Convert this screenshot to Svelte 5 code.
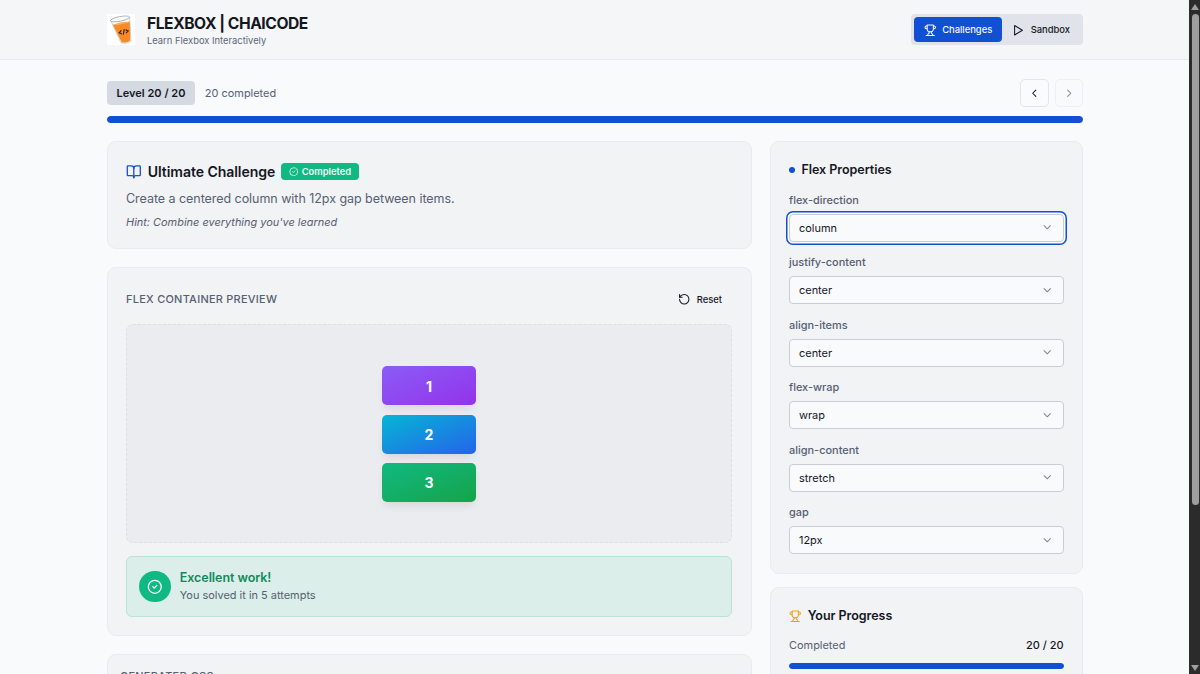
<script>
  let mode = "challenges";
  let level = 20;
  const total = 20;
  const completed = 20;
  let focused = "flex-direction";

  const properties = [
    { name: "flex-direction", value: "column" },
    { name: "justify-content", value: "center" },
    { name: "align-items", value: "center" },
    { name: "flex-wrap", value: "wrap" },
    { name: "align-content", value: "stretch" },
    { name: "gap", value: "12px" },
  ];

  const items = ["violet", "cyan", "green"];

  const previous = () => {
    if (level > 1) level -= 1;
  };

  const next = () => {
    if (level < total) level += 1;
  };
</script>

{#snippet trophy()}
  <svg class="icon" viewBox="0 0 24 24">
    <path d="M6 9H4.5a2.5 2.5 0 0 1 0-5H6" />
    <path d="M18 9h1.5a2.5 2.5 0 0 0 0-5H18" />
    <path d="M4 22h16" />
    <path d="M10 14.66V17c0 .55-.47.98-.97 1.21C7.85 18.75 7 20.24 7 22" />
    <path d="M14 14.66V17c0 .55.47.98.97 1.21C16.15 18.75 17 20.24 17 22" />
    <path d="M18 2H6v7a6 6 0 0 0 12 0V2Z" />
  </svg>
{/snippet}

{#snippet check()}
  <svg class="icon" viewBox="0 0 24 24">
    <circle cx="12" cy="12" r="10" />
    <path d="m9 12 2 2 4-4" />
  </svg>
{/snippet}

<div class="window">
  <div class="page">
    <header>
      <div class="container bar">
        <div class="brand">
          <svg class="logo" viewBox="0 0 28 31">
            <rect width="28" height="31" fill="#fff" />
            <path d="M5.6 10.8 Q14 11 23 7.6 L23.4 26.6 Q19.5 29.6 14.8 28.6 Z" fill="#f98a25" />
            <path d="M5.6 10.8 Q14 7.4 23 7.6 Q16 11.4 5.6 10.8 Z" fill="#fcae5c" />
            <path
              d="M3.6 6.2 L14 28.8 Q19 30.8 24 27.2 L22.6 3.4"
              fill="none"
              stroke="#c4c6c9"
              stroke-width="0.8"
            />
            <ellipse
              cx="13"
              cy="4.9"
              rx="9.8"
              ry="2.3"
              transform="rotate(-11 13 4.9)"
              fill="#fafafa"
              stroke="#979b9f"
              stroke-width="0.7"
            />
            <path
              d="m14.4 16.4-2.2 2.4 2.7 1.1M17.3 15.2l-1 5.4M18.6 15.8l2.6 1.2-2.2 2.2"
              fill="none"
              stroke="#36200f"
              stroke-width="1.1"
            />
          </svg>
          <div>
            <h1>FLEXBOX | CHAICODE</h1>
            <p>Learn Flexbox Interactively</p>
          </div>
        </div>
        <div class="tabs">
          <button
            class:active={mode == "challenges"}
            on:click={() => (mode = "challenges")}
          >
            {@render trophy()}
            Challenges
          </button>
          <button
            class:active={mode == "sandbox"}
            on:click={() => (mode = "sandbox")}
          >
            <svg class="icon" viewBox="0 0 24 24">
              <path d="M5 3l15 9-15 9z" />
            </svg>
            Sandbox
          </button>
        </div>
      </div>
    </header>

    <main class="container">
      <div class="level">
        <span class="level-badge">Level {level} / {total}</span>
        <span class="done">{completed} completed</span>
        <div class="nav">
          <button aria-label="Previous" disabled={level == 1} on:click={previous}>
            <svg class="icon" viewBox="0 0 24 24"><path d="m15 18-6-6 6-6" /></svg>
          </button>
          <button aria-label="Next" disabled={level == total} on:click={next}>
            <svg class="icon" viewBox="0 0 24 24"><path d="m9 18 6-6-6-6" /></svg>
          </button>
        </div>
      </div>
      <div class="progress">
        <div style="width: {(completed / total) * 100}%"></div>
      </div>

      <div class="columns">
        <div class="left">
          <section class="card challenge">
            <div class="challenge-title">
              <svg class="icon book" viewBox="0 0 24 24">
                <path d="M12 7v14" />
                <path
                  d="M3 18a1 1 0 0 1-1-1V4a1 1 0 0 1 1-1h5a4 4 0 0 1 4 4 4 4 0 0 1 4-4h5a1 1 0 0 1 1 1v13a1 1 0 0 1-1 1h-6a3 3 0 0 0-3 3 3 3 0 0 0-3-3z"
                />
              </svg>
              <h2>Ultimate Challenge</h2>
              <span class="completed">{@render check()}Completed</span>
            </div>
            <p class="description">
              Create a centered column with 12px gap between items.
            </p>
            <p class="hint">Hint: Combine everything you've learned</p>
          </section>

          <section class="card preview">
            <div class="preview-head">
              <h3>FLEX CONTAINER PREVIEW</h3>
              <button class="reset">
                <svg class="icon" viewBox="0 0 24 24">
                  <path d="M3 12a9 9 0 1 0 9-9 9.75 9.75 0 0 0-6.74 2.74L3 8" />
                  <path d="M3 3v5h5" />
                </svg>
                Reset
              </button>
            </div>
            <div class="flexbox">
              {#each items as item, i}
                <div class="item {item}">{i + 1}</div>
              {/each}
            </div>
            <div class="success">
              <div class="success-icon">{@render check()}</div>
              <div>
                <h4>Excellent work!</h4>
                <p>You solved it in 5 attempts</p>
              </div>
            </div>
          </section>

          <section class="card generated">
            <h3>GENERATED CSS</h3>
          </section>
        </div>

        <aside>
          <section class="card properties">
            <h2><span class="dot"></span>Flex Properties</h2>
            {#each properties as property}
              <div class="field">
                <span class="label">{property.name}</span>
                <button
                  class="select"
                  class:focused={focused == property.name}
                  on:click={() => (focused = property.name)}
                >
                  <span>{property.value}</span>
                  <svg class="icon" viewBox="0 0 24 24"><path d="m6 9 6 6 6-6" /></svg>
                </button>
              </div>
            {/each}
          </section>

          <section class="card stats">
            <h2>{@render trophy()}Your Progress</h2>
            <div class="row">
              <span>Completed</span>
              <strong>{completed} / {total}</strong>
            </div>
            <div class="progress">
              <div style="width: {(completed / total) * 100}%"></div>
            </div>
          </section>
        </aside>
      </div>
    </main>
  </div>

  <div class="scrollbar">
    <span class="up"></span>
    <span class="thumb"></span>
    <span class="down"></span>
  </div>
</div>

<style>
  :global(body) {
    margin: 0;
    overflow: hidden;
  }

  * {
    box-sizing: border-box;
  }

  h1,
  h2,
  h3,
  h4,
  p {
    margin: 0;
  }

  button {
    font: inherit;
    color: inherit;
    border: 0;
    padding: 0;
    background: none;
    cursor: pointer;
  }

  .icon {
    width: 12.5px;
    height: 12.5px;
    fill: none;
    stroke: currentColor;
    stroke-width: 2;
    stroke-linecap: round;
    stroke-linejoin: round;
    flex: none;
  }

  .window {
    display: flex;
    width: 1200px;
    height: 674px;
    overflow: hidden;
    font-family: Inter, sans-serif;
    font-size: 10.94px;
    line-height: 15.6px;
    color: #14171f;
    background: #f9fafc;
  }

  .page {
    flex: 1;
    height: 674px;
    overflow: hidden;
  }

  .container {
    width: 976px;
    margin-left: 107px;
  }

  header {
    height: 60px;
    background: #f5f6f8;
    border-bottom: 1px solid #e7e9ed;
  }

  .bar {
    height: 59px;
    display: flex;
    align-items: center;
    justify-content: space-between;
  }

  .brand {
    display: flex;
    align-items: center;
    gap: 12px;
  }

  .logo {
    width: 28px;
    height: 31px;
  }

  h1 {
    padding-top: 1px;
    font-size: 15.63px;
    line-height: 21.9px;
    font-weight: 700;
    letter-spacing: -0.45px;
  }

  .brand p {
    font-size: 9.4px;
    line-height: 12.5px;
    color: #5d6678;
  }

  .tabs {
    display: flex;
    height: 31px;
    padding: 3px;
    border-radius: 4px;
    background: #e0e3ea;
  }

  .tabs button {
    display: flex;
    align-items: center;
    gap: 6px;
    padding: 1px 10px 0;
    border-radius: 4px;
    font-size: 9.4px;
    font-weight: 500;
  }

  .tabs .active {
    color: #f4f7fd;
    background: #1150d3;
  }

  .level {
    display: flex;
    align-items: center;
    height: 28px;
    margin-top: 19px;
  }

  .level-badge {
    padding: 4.5px 9.6px 3.1px;
    border-radius: 4px;
    font-size: 11px;
    font-weight: 600;
    background: #d5d9e2;
  }

  .done {
    margin-left: 9.8px;
    padding-top: 1px;
    color: #566073;
  }

  .nav {
    display: flex;
    gap: 6px;
    margin-left: auto;
  }

  .nav button {
    display: grid;
    place-items: center;
    width: 28.5px;
    height: 28.5px;
    border: 1px solid #e3e5e9;
    border-radius: 5px;
    background: #fafbfc;
  }

  .nav button:disabled {
    opacity: 0.5;
  }

  .progress {
    height: 6.3px;
    margin-top: 9.3px;
    border-radius: 4px;
    overflow: hidden;
    background: #dfe3ea;
  }

  .progress > div {
    height: 100%;
    border-radius: 4px;
    background: #1150d3;
  }

  .columns {
    display: flex;
    gap: 18.5px;
    margin-top: 18.4px;
  }

  .left {
    display: flex;
    flex-direction: column;
    gap: 18.5px;
    width: 644.5px;
  }

  aside {
    display: flex;
    flex-direction: column;
    gap: 12.8px;
    width: 313px;
  }

  .card {
    padding: 18.5px 18.5px 18.5px 18px;
    border: 1px solid #e9ebee;
    border-radius: 9px;
    background: #f2f3f5;
  }

  .challenge {
    height: 108px;
  }

  .challenge-title {
    display: flex;
    align-items: center;
    height: 22px;
  }

  .book {
    width: 15.6px;
    height: 15.6px;
    color: #1150d3;
  }

  .challenge-title h2 {
    margin: 0 6.2px 0 6.2px;
    font-size: 14.06px;
    font-weight: 600;
    letter-spacing: -0.07px;
  }

  .completed {
    display: flex;
    align-items: center;
    gap: 3px;
    height: 17px;
    padding: 0 8px;
    border-radius: 4px;
    font-size: 9.38px;
    font-weight: 600;
    color: #f0fdf8;
    background: #10b981;
  }

  .completed .icon,
  .completed :global(.icon) {
    width: 9.4px;
    height: 9.4px;
  }

  .description {
    margin-top: 7px;
    font-size: 12.5px;
    line-height: 20px;
    letter-spacing: -0.045px;
    color: #566073;
  }

  .hint {
    margin-top: 6px;
    font-style: italic;
    color: #566073;
  }

  .preview {
    height: 368.5px;
  }

  .preview-head {
    display: flex;
    align-items: center;
    justify-content: space-between;
    height: 25.5px;
  }

  h3 {
    padding-top: 1px;
    font-size: 10.94px;
    font-weight: 500;
    letter-spacing: 0.27px;
    color: #566073;
  }

  .reset {
    display: flex;
    align-items: center;
    gap: 6px;
    padding-right: 10px;
    font-size: 9.4px;
    font-weight: 500;
  }

  .flexbox {
    display: flex;
    flex-direction: column;
    align-items: center;
    justify-content: center;
    gap: 9.4px;
    height: 219px;
    margin-top: 12px;
    padding-top: 0.6px;
    border: 1.5px dashed #dddfe4;
    border-radius: 7px;
    background: #ebecf0;
  }

  .item {
    display: grid;
    place-items: center;
    width: 94px;
    height: 39.1px;
    padding-top: 1px;
    border-radius: 5px;
    font-size: 14.06px;
    font-weight: 700;
    color: #fff;
    box-shadow: 0 6px 10px -3px rgba(0, 0, 0, 0.1);
  }

  .violet {
    background: linear-gradient(to bottom right, #8b5cf6, #9333ea);
  }

  .cyan {
    background: linear-gradient(to bottom right, #06b6d4, #2563eb);
  }

  .green {
    background: linear-gradient(to bottom right, #10b981, #16a34a);
  }

  .success {
    display: flex;
    align-items: center;
    gap: 9.2px;
    height: 61px;
    margin-top: 12.5px;
    padding: 0 12.3px;
    border: 1px solid #b9e3d5;
    border-radius: 6px;
    background: #dbeee9;
  }

  .success-icon {
    display: grid;
    place-items: center;
    width: 31.3px;
    height: 31.3px;
    border-radius: 50%;
    color: #fff;
    background: #10b981;
  }

  .success-icon .icon,
  .success-icon :global(.icon) {
    width: 15.6px;
    height: 15.6px;
  }

  h4 {
    font-size: 12.5px;
    line-height: 18.8px;
    font-weight: 600;
    letter-spacing: -0.06px;
    color: #138a5c;
  }

  .success p {
    color: #566073;
  }

  .generated {
    height: 120px;
    padding: 12.8px 12.5px 12.5px 12px;
  }

  .properties {
    height: 433px;
  }

  aside h2 {
    display: flex;
    align-items: center;
    height: 18.8px;
    padding-top: 0.6px;
    font-size: 12.5px;
    font-weight: 600;
    letter-spacing: -0.04px;
  }

  .dot {
    width: 6.3px;
    height: 6.3px;
    margin-right: 6.2px;
    border-radius: 50%;
    background: #1150d3;
  }

  .field {
    display: flex;
    flex-direction: column;
    gap: 4.8px;
    margin-top: 12.5px;
  }

  .label {
    line-height: 17px;
    font-weight: 500;
    color: #566073;
  }

  .select {
    display: flex;
    align-items: center;
    justify-content: space-between;
    height: 28.2px;
    padding: 0 9px;
    border: 1px solid #c9cdd4;
    border-radius: 4px;
    background: #f9fafc;
  }

  .select span {
    padding-top: 1.4px;
  }

  .select .icon {
    opacity: 0.5;
  }

  .focused {
    box-shadow:
      0 0 0 1.5px #f9fafc,
      0 0 0 3px #1150d3;
  }

  .stats {
    height: 180px;
  }

  .stats h2 {
    gap: 6.2px;
  }

  .stats h2 .icon,
  .stats h2 :global(.icon) {
    color: #f0a020;
  }

  .row {
    display: flex;
    justify-content: space-between;
    margin-top: 12.8px;
    color: #566073;
  }

  .row strong {
    font-weight: 500;
    color: #14171f;
  }

  .scrollbar {
    display: flex;
    flex-direction: column;
    align-items: center;
    width: 11px;
    padding: 4px 0 3px 1px;
    background: #2b2b2b;
  }

  .up,
  .down {
    border-left: 4px solid transparent;
    border-right: 4px solid transparent;
  }

  .up {
    border-bottom: 6px solid #9e9e9e;
  }

  .thumb {
    width: 7px;
    height: 491px;
    margin-top: 4px;
    border-radius: 4px;
    background: #9e9e9e;
  }

  .down {
    margin-top: auto;
    border-top: 6px solid #9e9e9e;
  }
</style>
